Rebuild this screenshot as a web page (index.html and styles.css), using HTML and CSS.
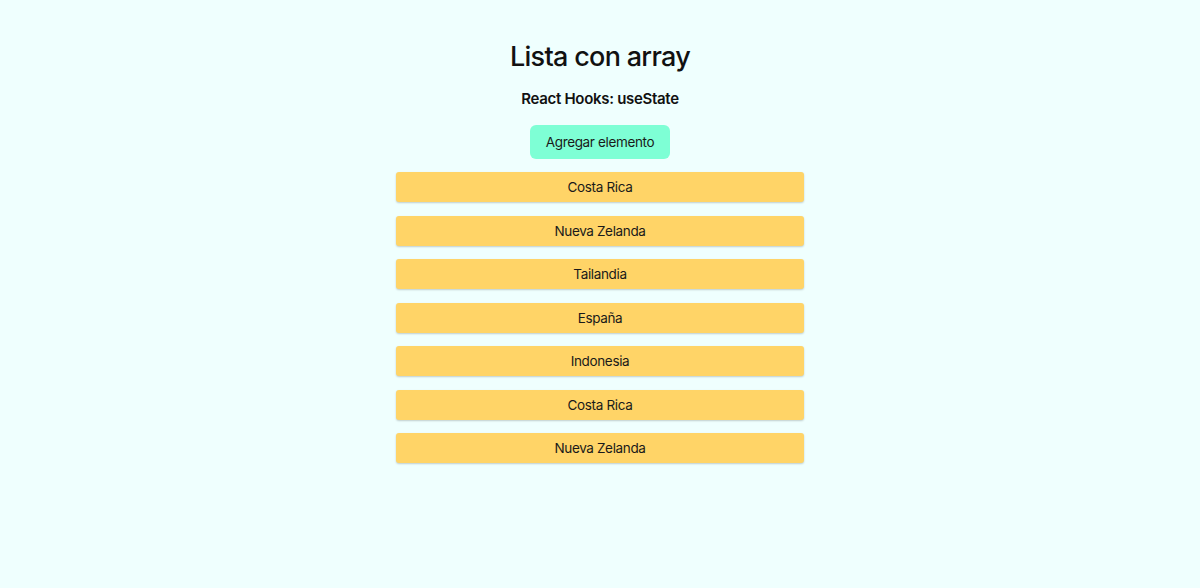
FILE: index.html
```html
<!DOCTYPE html>
<html lang="es">
<head>
<meta charset="utf-8">
<title>Lista con array</title>
<link rel="stylesheet" href="styles.css">
</head>
<body>
<main class="app">
  <h1 class="title">Lista con array</h1>
  <h2 class="subtitle">React Hooks: useState</h2>
  <button class="add-btn">Agregar elemento</button>
  <ul class="list">
    <li class="item">Costa Rica</li>
    <li class="item">Nueva Zelanda</li>
    <li class="item">Tailandia</li>
    <li class="item">España</li>
    <li class="item">Indonesia</li>
    <li class="item">Costa Rica</li>
    <li class="item">Nueva Zelanda</li>
  </ul>
</main>
</body>
</html>
```
FILE: styles.css
```css
html, body {
  margin: 0;
  padding: 0;
  background: #effffe;
  font-family: Inter, "Noto Sans", sans-serif;
  color: #111;
}
.app {
  display: flex;
  flex-direction: column;
  align-items: center;
  padding-top: 38px;
  padding-bottom: 20px;
}
.title {
  margin: 0;
  font-size: 27px;
  font-weight: 500;
  line-height: 38px;
  letter-spacing: -0.7px;
}
.subtitle {
  margin: 13px 0 0;
  font-size: 15px;
  font-weight: 600;
  line-height: 20px;
  letter-spacing: -0.3px;
}
.add-btn {
  margin-top: 16px;
  width: 140px;
  height: 34px;
  border: none;
  border-radius: 6px;
  background: #7effd5;
  font-family: inherit;
  font-size: 13.5px;
  letter-spacing: -0.35px;
  color: #1a1a1a;
}
.list {
  list-style: none;
  margin: 13px 0 0;
  padding: 0;
  width: 408px;
  display: flex;
  flex-direction: column;
  gap: 13.5px;
}
.item {
  height: 30px;
  display: flex;
  align-items: center;
  justify-content: center;
  background: #ffd467;
  border-radius: 3px;
  box-shadow: 0 1px 2px rgba(0, 0, 0, 0.2);
  font-size: 13.5px;
  letter-spacing: -0.35px;
  color: #1a1a1a;
}
```
